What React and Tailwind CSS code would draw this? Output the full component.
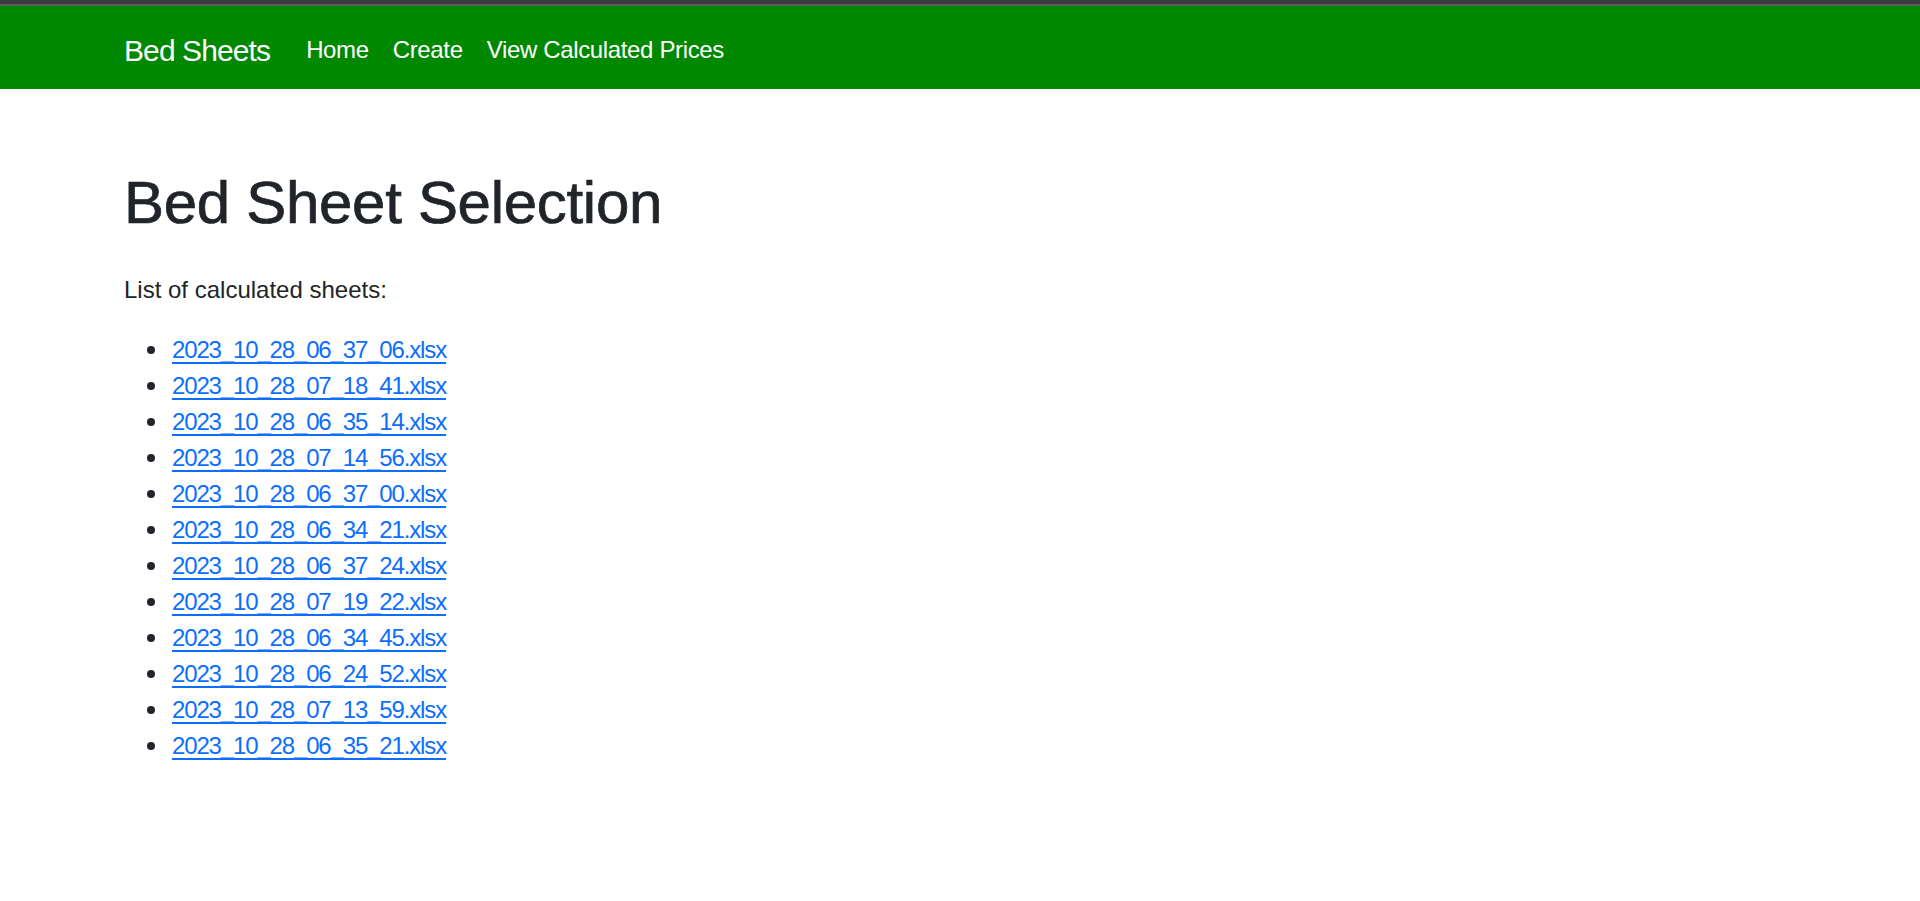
const files = [
  "2023_10_28_06_37_06.xlsx",
  "2023_10_28_07_18_41.xlsx",
  "2023_10_28_06_35_14.xlsx",
  "2023_10_28_07_14_56.xlsx",
  "2023_10_28_06_37_00.xlsx",
  "2023_10_28_06_34_21.xlsx",
  "2023_10_28_06_37_24.xlsx",
  "2023_10_28_07_19_22.xlsx",
  "2023_10_28_06_34_45.xlsx",
  "2023_10_28_06_24_52.xlsx",
  "2023_10_28_07_13_59.xlsx",
  "2023_10_28_06_35_21.xlsx"
];

const links = ["Home", "Create", "View Calculated Prices"];

export default function App() {
  return (
    <div className="min-h-screen bg-white text-[#212529]" style={{ fontFamily: '"Liberation Sans", Arial, sans-serif' }}>
      <div className="h-[4px] bg-[#3a3a3e]" />
      <div className="h-[2px] bg-[#5c5c5c]" />
      <nav className="flex h-[83px] items-center bg-[#008800] pl-[124px] pt-[5px]">
        <a href="#" className="mr-[24px] text-[30px] leading-[45px] tracking-[-0.9px] text-white">
          Bed Sheets
        </a>
        <ul className="flex">
          {links.map((label) => (
            <li key={label}>
              <a href="#" className="block px-[12px] text-[24px] leading-[36px] tracking-[-0.35px] text-white">
                {label}
              </a>
            </li>
          ))}
        </ul>
      </nav>

      <main className="px-[124px] pt-[78px]">
        <h1 className="mb-[33px] text-[60px] leading-[72px] tracking-[-0.3px] [-webkit-text-stroke:0.7px_#212529]">
          Bed Sheet Selection
        </h1>
        <p className="mb-[24px] text-[24px] leading-[36px]">List of calculated sheets:</p>
        <ul className="pl-[48px] text-[24px] leading-[36px]">
          {files.map((name) => (
            <li key={name} className="flex items-center">
              <span className="ml-[-25px] mr-[17px] h-[8px] w-[8px] shrink-0 rounded-full bg-[#212529]" />
              <a href="#" className="tracking-[-1.15px] text-[#0d6efd] underline decoration-2 underline-offset-[4px]">
                {name}
              </a>
            </li>
          ))}
        </ul>
      </main>
    </div>
  );
}
